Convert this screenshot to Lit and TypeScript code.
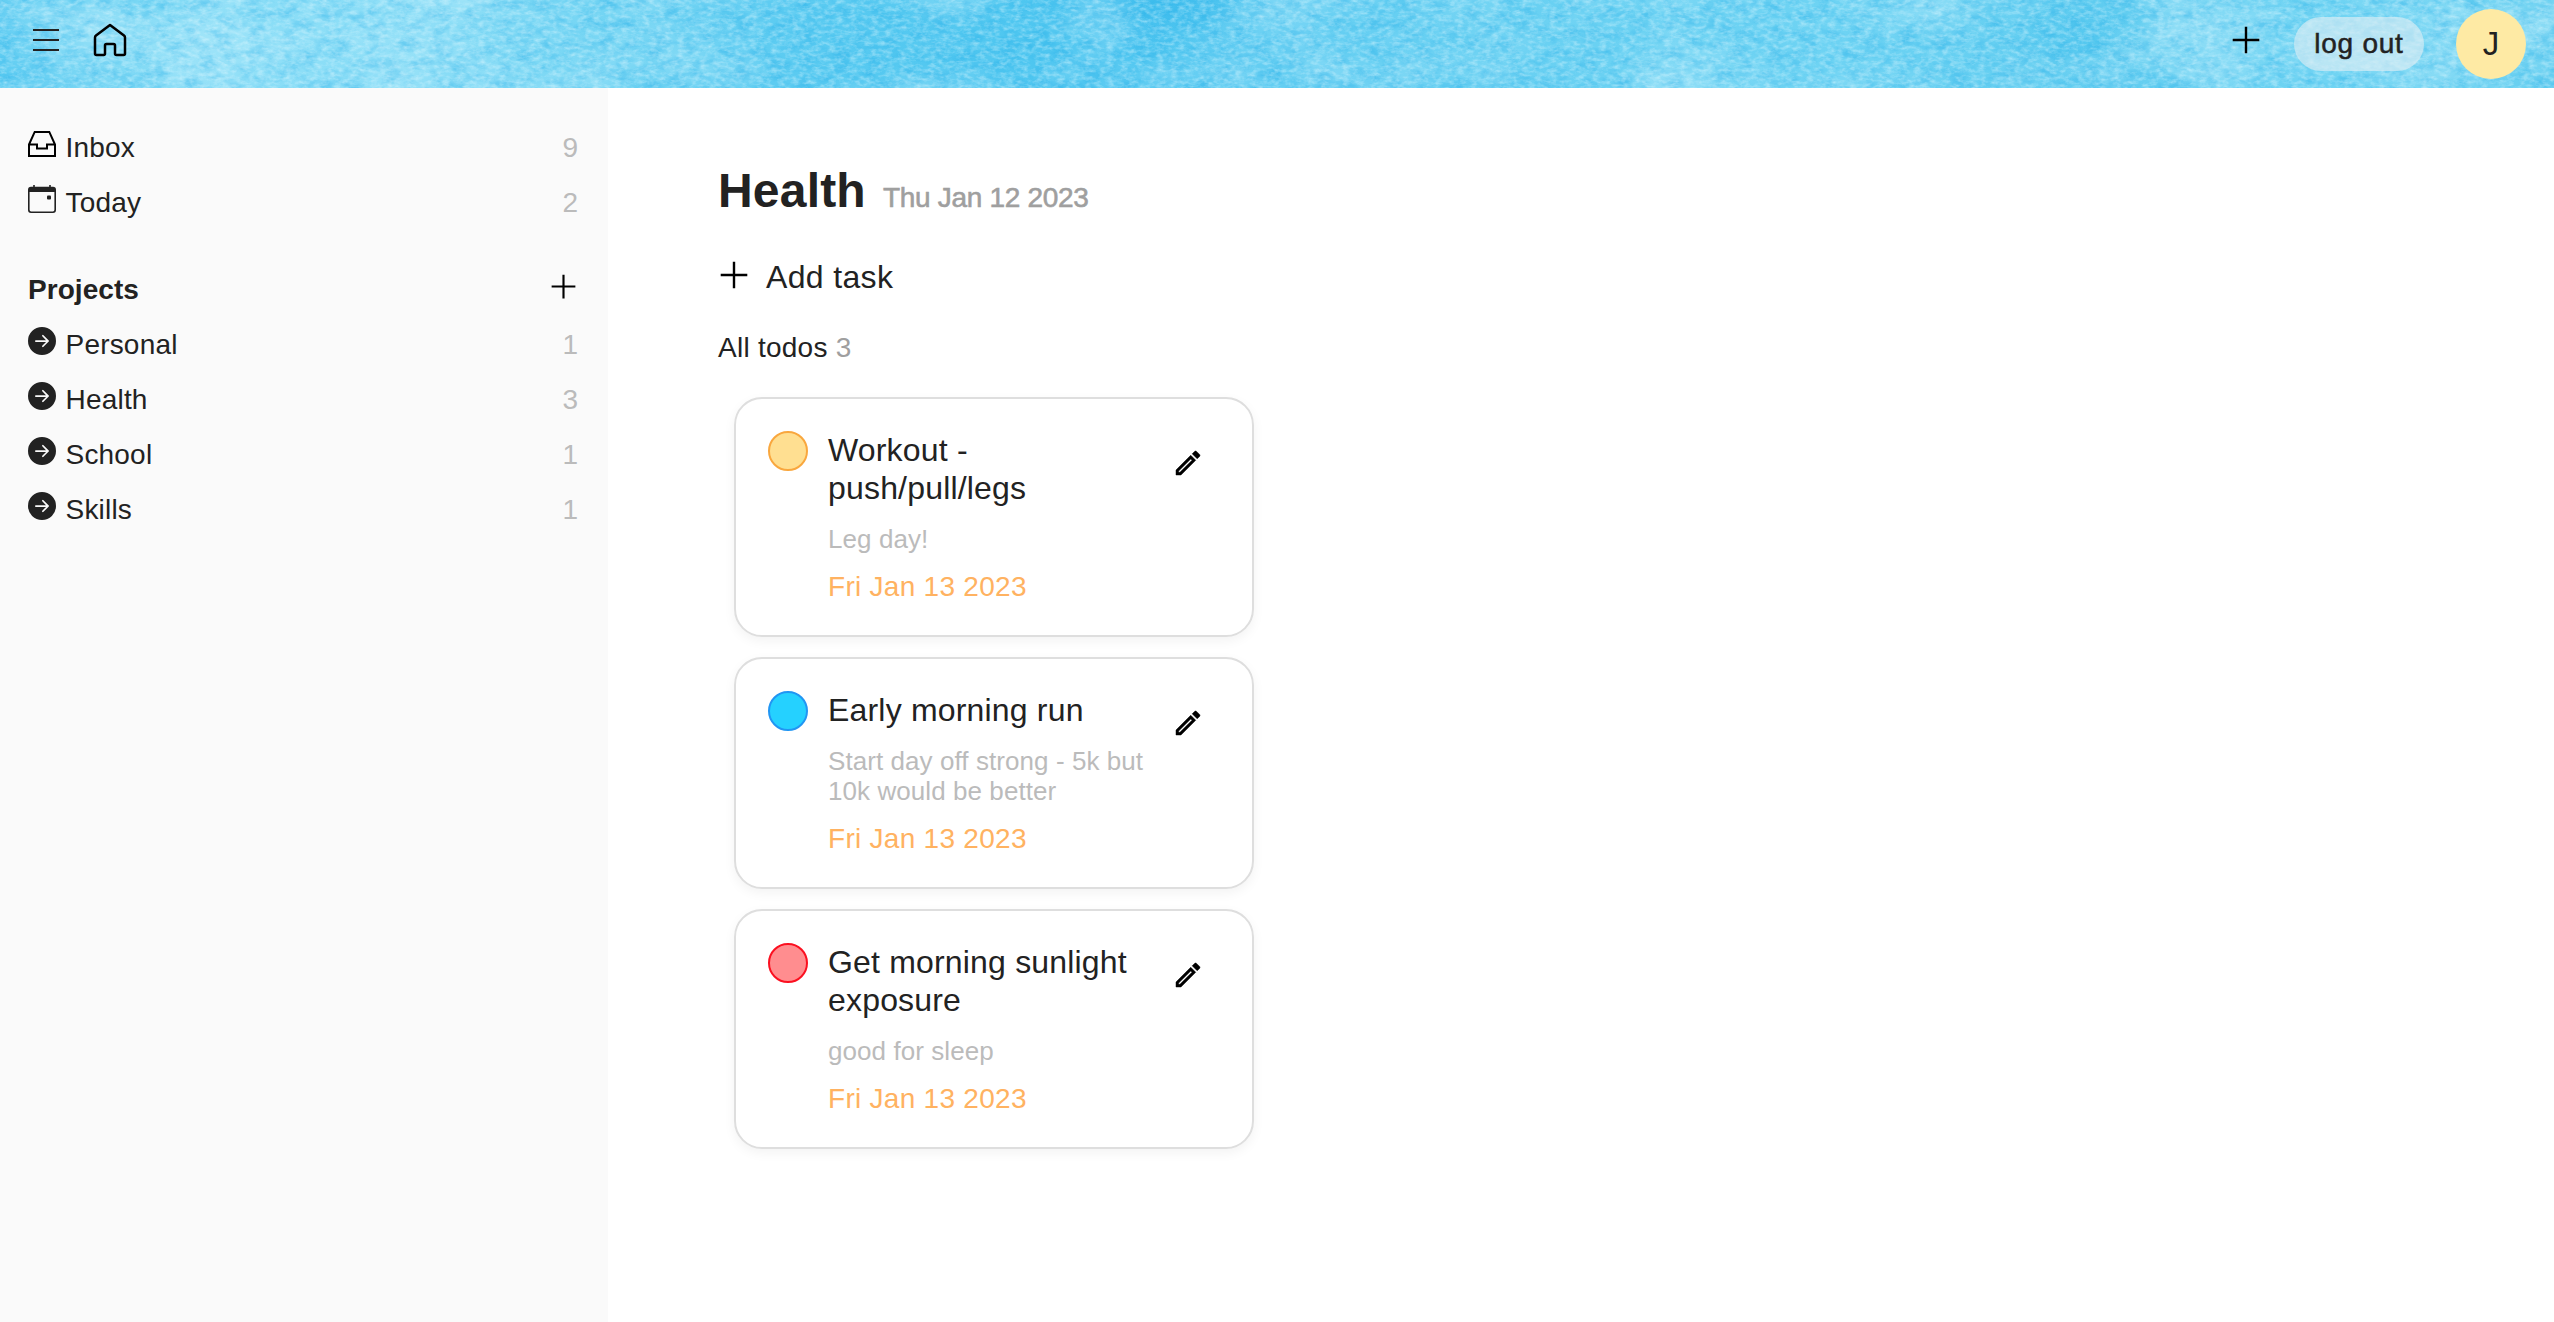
import { LitElement, html, css } from "lit";
import { customElement } from "lit/decorators.js";

interface Task { title: string; note: string; date: string; tone: string }

const links = [{ name: "Inbox", count: 9 }, { name: "Today", count: 2 }];
const projects = [
  { name: "Personal", count: 1 },
  { name: "Health", count: 3 },
  { name: "School", count: 1 },
  { name: "Skills", count: 1 },
];
const tasks: Task[] = [
  { title: "Workout - push/pull/legs", note: "Leg day!", date: "Fri Jan 13 2023", tone: "medium" },
  { title: "Early morning run", note: "Start day off strong - 5k but 10k would be better", date: "Fri Jan 13 2023", tone: "low" },
  { title: "Get morning sunlight exposure", note: "good for sleep", date: "Fri Jan 13 2023", tone: "high" },
];

const plus = (size: number) => html`<svg class="icon" width=${size} height=${size} viewBox="0 0 28 28"><path d="M14 0.7V27.3M0.7 14H27.3" stroke="#000" stroke-width="2.4" fill="none"/></svg>`;
const menu = html`<svg class="icon" width="26" height="24" viewBox="0 0 26 24"><path d="M0 2H26M0 12H26M0 22H26" stroke="#222" stroke-width="2.2" fill="none"/></svg>`;
const home = html`<svg class="icon" width="34" height="34" viewBox="0 0 34 34"><path d="M17 2L31 12.600Q32 13.400 32 14.600V30.500Q32 32 30.500 32H23.500Q22 32 22 30.500V22.500Q22 21 20.500 21H13.500Q12 21 12 22.500V30.500Q12 32 10.500 32H3.500Q2 32 2 30.500V14.600Q2 13.400 3 12.600Z" stroke="#000" stroke-width="2.500" stroke-linejoin="round" fill="none"/></svg>`;
const inbox = html`<svg class="icon" width="28" height="28" viewBox="0 0 28 28"><path d="M1 14.500L6.700 1.900H21.300L27 14.500V26H1ZM1 14.500H9V18.500H19V14.500H27" stroke="#000" stroke-width="2" fill="none"/></svg>`;
const calendar = html`<svg class="icon" width="28" height="28" viewBox="0 0 28 28"><path d="M3 1.700H25Q28 1.700 28 4.700V25Q28 28 25 28H3Q0 28 0 25V4.700Q0 1.700 3 1.700ZM1.600 7V24.800Q1.600 26.400 3.200 26.400H24.800Q26.400 26.400 26.400 24.800V7Z" fill-rule="evenodd" fill="#222"/><path d="M6 0V3M22 0V3" stroke="#222" stroke-width="1.600"/><rect x="19" y="10.500" width="4" height="4" rx="1" fill="#222"/></svg>`;
const arrow = html`<svg class="icon" width="28" height="28" viewBox="0 0 16 16"><path fill="#222" d="M8 0a8 8 0 1 1 0 16A8 8 0 0 1 8 0zM4.500 7.500a.5.5 0 0 0 0 1h5.793l-2.147 2.146a.5.5 0 0 0 .708.708l3-3a.5.5 0 0 0 0-.708l-3-3a.5.5 0 1 0-.708.708L10.293 7.500H4.500z"/></svg>`;
const pencil = html`<svg class="icon" width="32" height="32" viewBox="0 0 24 24"><path stroke="#000" stroke-width=".35" d="M14.06 9.02l.92.92L5.920 19H5v-.92l9.060-9.060M17.660 3c-.25 0-.51.1-.7.290l-1.830 1.830 3.750 3.750 1.830-1.830c.39-.39.39-1.020 0-1.410l-2.340-2.340c-.2-.2-.45-.29-.71-.29zm-3.600 3.190L3 17.250V21h3.750L17.810 9.940l-3.750-3.750z"/></svg>`;

/* Watercolour paper: broad washes of colour with fine fibres on top. */
const paper = html`<svg class="paper" width="100%" height="88" aria-hidden="true">
  <filter id="wash" x="0" y="0" width="100%" height="100%" color-interpolation-filters="sRGB">
    <feTurbulence type="fractalNoise" baseFrequency="0.008 0.012" numOctaves="3" seed="8"/>
    <feColorMatrix values="0 0 0 0 0.85  0 0 0 0 0.97  0 0 0 0 1  0.9 0 0 0 -0.37"/>
  </filter>
  <filter id="shade" x="0" y="0" width="100%" height="100%" color-interpolation-filters="sRGB">
    <feTurbulence type="fractalNoise" baseFrequency="0.06 0.1" numOctaves="4" seed="21"/>
    <feColorMatrix values="0 0 0 0 0.1  0 0 0 0 0.66  0 0 0 0 0.9  0.8 0 0 0 -0.33"/>
  </filter>
  <filter id="fibre" x="0" y="0" width="100%" height="100%" color-interpolation-filters="sRGB">
    <feTurbulence type="fractalNoise" baseFrequency="0.14 0.26" numOctaves="3" seed="3"/>
    <feColorMatrix values="0 0 0 0 0.9  0 0 0 0 0.98  0 0 0 0 1  0.9 0 0 0 -0.36"/>
  </filter>
  <rect width="100%" height="88" filter="url(#wash)"/>
  <rect width="100%" height="88" filter="url(#shade)"/>
  <rect width="100%" height="88" filter="url(#fibre)"/>
</svg>`;

@customElement("app-root")
export class AppRoot extends LitElement {
  static styles = css`
    :host { display: flex; flex-direction: column; height: 1322px; overflow: hidden; background: #fff; color: #222;
      font: 28px/34px "Liberation Sans", Arial, sans-serif; }
    * { box-sizing: border-box; }
    .icon { display: block; flex: none; }
    .header { position: relative; height: 88px; flex: none; display: flex; align-items: center; padding: 0 28px 0 33px; overflow: hidden;
      background:
        radial-gradient(ellipse 120px 50px at 1165px 0, rgba(48,182,235,.55), transparent),
        radial-gradient(ellipse 70px 40px at 2075px 44px, rgba(60,190,236,.35), transparent),
        linear-gradient(90deg, #58caf1 0%, #79d7f4 5%, #8cdef7 12%, #88dcf6 18%, #72d4f3 24%, #5bcbf1 31%, #50c7f0 38%, #4cc5f0 44%, #64cef2 50%, #68d0f2 58%, #6ed3f3 72%, #5fccf0 82%, #70d4f3 91%, #64cef0 100%); }
    .paper { position: absolute; left: 0; top: 0; }
    .bar { position: relative; flex: 1; display: flex; align-items: center; }
    .home { margin: 0 0 8px 34px; }
    .menu { margin-bottom: 8px; }
    .actions { margin-left: auto; display: flex; align-items: center; }
    .add { margin: 0 34px 8px 0; }
    .logout { width: 130px; height: 54px; border-radius: 27px; background: rgba(222,238,244,.64); text-align: center; line-height: 54px; letter-spacing: .75px; -webkit-text-stroke: .5px #222; }
    .avatar { width: 70px; height: 70px; border-radius: 50%; margin-left: 32px; background: #feeaa4; font-size: 33px; line-height: 70px; text-align: center; }
    .body { flex: 1; display: flex; }
    .side { width: 608px; background: #fafafa; padding: 32px 30px 0 28px; }
    .row { height: 55px; display: flex; align-items: center; }
    .row .icon { margin-bottom: 7px; }
    .name { margin-left: 9.500px; letter-spacing: .2px; }
    .count { margin-left: auto; color: #bbb; }
    .heading { margin-top: 32px; font-weight: 700; font-size: 28px; letter-spacing: .05px; }
    .heading .icon { margin: 0 2px 7px auto; }
    .main { flex: 1; padding: 76px 0 0 110px; }
    .title { display: flex; align-items: baseline; line-height: 54px; font-size: 48px; font-weight: 700; letter-spacing: .2px; }
    .date { margin-left: 17px; font-size: 28px; font-weight: 400; letter-spacing: -.3px; color: #9f9f9f; -webkit-text-stroke: .6px #9f9f9f; }
    .addtask { display: flex; align-items: center; height: 40px; margin-top: 32px; padding-left: 2px; font-size: 32px; letter-spacing: .35px; }
    .addtask .icon { margin: 0 18px 5px 0; }
    .all { margin-top: 34px; letter-spacing: .25px; }
    .total { color: #9f9f9f; }
    .list { display: flex; flex-direction: column; gap: 20px; margin: 32px 0 0 16px; }
    .card { width: 520px; border: 2px solid #dedede; border-radius: 28px; padding: 32px 48px 31px 32px; display: flex; box-shadow: 0 4px 12px rgba(0,0,0,.05); }
    .dot { width: 40px; height: 40px; flex: none; border-radius: 50%; border: 2px solid; }
    .medium { background: #ffdf91; border-color: #f9a73e; }
    .low { background: #25d1ff; border-color: #2196f3; }
    .high { background: #ff8d8f; border-color: #fb1020; }
    .text { width: 330px; margin-left: 20px; }
    .label { font-size: 32px; line-height: 38px; letter-spacing: .18px; }
    .note { font-size: 26px; line-height: 30px; margin-top: 17px; letter-spacing: .07px; color: #bbb; }
    .due { margin-top: 16px; line-height: 34px; letter-spacing: .28px; color: #ffb261; }
    .edit { margin: 16px 0 0 auto; }
  `;

  private row(icon: unknown, name: string, count: number) {
    return html`<div class="row">${icon}<span class="name">${name}</span><span class="count">${count}</span></div>`;
  }

  render() {
    return html`
      <header class="header">
        ${paper}
        <div class="bar">
          <div class="menu">${menu}</div><div class="home">${home}</div>
          <div class="actions"><div class="add">${plus(28)}</div><div class="logout">log out</div><div class="avatar">J</div></div>
        </div>
      </header>
      <div class="body">
        <nav class="side">
          ${links.map((l, i) => this.row(i ? calendar : inbox, l.name, l.count))}
          <div class="row heading">Projects${plus(25)}</div>
          ${projects.map((p) => this.row(arrow, p.name, p.count))}
        </nav>
        <main class="main">
          <div class="title">Health<span class="date">Thu Jan 12 2023</span></div>
          <div class="addtask">${plus(28)}Add task</div>
          <div class="all">All todos <span class="total">3</span></div>
          <div class="list">
            ${tasks.map((t) => html`<article class="card">
              <div class="dot ${t.tone}"></div>
              <div class="text"><div class="label">${t.title}</div><div class="note">${t.note}</div><div class="due">${t.date}</div></div>
              <div class="edit">${pencil}</div>
            </article>`)}
          </div>
        </main>
      </div>`;
  }
}
